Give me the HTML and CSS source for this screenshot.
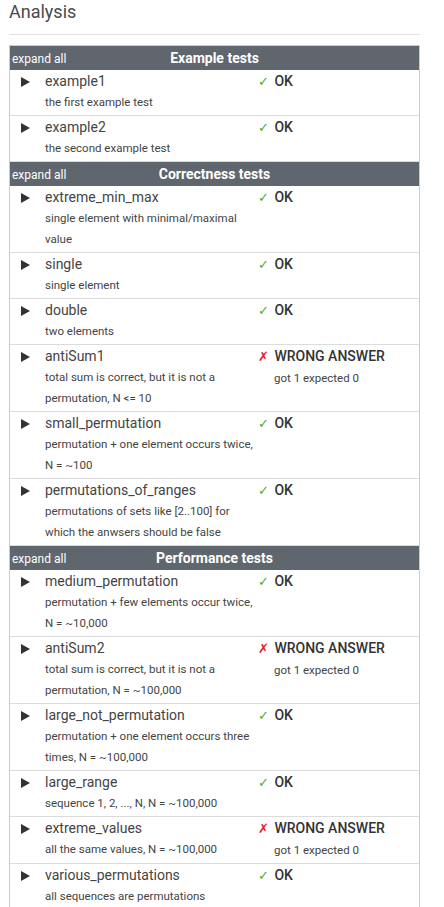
FILE: index.html
```html
<!DOCTYPE html>
<html>
<head>
<meta charset="utf-8">
<link rel="stylesheet" href="styles.css">
</head>
<body>
<div class="page">
  <h2 class="title">Analysis</h2>
  <hr class="rule">
  <div class="tests">
    <div class="group-head"><span class="expand">expand all</span><span class="group-title">Example tests</span><span></span></div>

    <div class="test">
      <div class="arrow"><svg width="9" height="10" viewBox="0 0 9 10"><polygon points="0,0 9,5 0,10" fill="#333"/></svg></div>
      <div class="info"><div class="name">example1</div><div class="desc">the first example test</div></div>
      <div class="result"><div class="status"><span class="mark ok">✓</span> OK</div></div>
    </div>
    <div class="test">
      <div class="arrow"><svg width="9" height="10" viewBox="0 0 9 10"><polygon points="0,0 9,5 0,10" fill="#333"/></svg></div>
      <div class="info"><div class="name">example2</div><div class="desc">the second example test</div></div>
      <div class="result"><div class="status"><span class="mark ok">✓</span> OK</div></div>
    </div>

    <div class="group-head"><span class="expand">expand all</span><span class="group-title">Correctness tests</span><span></span></div>

    <div class="test">
      <div class="arrow"><svg width="9" height="10" viewBox="0 0 9 10"><polygon points="0,0 9,5 0,10" fill="#333"/></svg></div>
      <div class="info"><div class="name">extreme_min_max</div><div class="desc">single element with minimal/maximal value</div></div>
      <div class="result"><div class="status"><span class="mark ok">✓</span> OK</div></div>
    </div>
    <div class="test">
      <div class="arrow"><svg width="9" height="10" viewBox="0 0 9 10"><polygon points="0,0 9,5 0,10" fill="#333"/></svg></div>
      <div class="info"><div class="name">single</div><div class="desc">single element</div></div>
      <div class="result"><div class="status"><span class="mark ok">✓</span> OK</div></div>
    </div>
    <div class="test">
      <div class="arrow"><svg width="9" height="10" viewBox="0 0 9 10"><polygon points="0,0 9,5 0,10" fill="#333"/></svg></div>
      <div class="info"><div class="name">double</div><div class="desc">two elements</div></div>
      <div class="result"><div class="status"><span class="mark ok">✓</span> OK</div></div>
    </div>
    <div class="test">
      <div class="arrow"><svg width="9" height="10" viewBox="0 0 9 10"><polygon points="0,0 9,5 0,10" fill="#333"/></svg></div>
      <div class="info"><div class="name">antiSum1</div><div class="desc">total sum is correct, but it is not a permutation, N &lt;= 10</div></div>
      <div class="result"><div class="status"><span class="mark bad">✗</span> WRONG ANSWER</div><div class="detail">got 1 expected 0</div></div>
    </div>
    <div class="test">
      <div class="arrow"><svg width="9" height="10" viewBox="0 0 9 10"><polygon points="0,0 9,5 0,10" fill="#333"/></svg></div>
      <div class="info"><div class="name">small_permutation</div><div class="desc">permutation + one element occurs twice, N = ~100</div></div>
      <div class="result"><div class="status"><span class="mark ok">✓</span> OK</div></div>
    </div>
    <div class="test">
      <div class="arrow"><svg width="9" height="10" viewBox="0 0 9 10"><polygon points="0,0 9,5 0,10" fill="#333"/></svg></div>
      <div class="info"><div class="name">permutations_of_ranges</div><div class="desc">permutations of sets like [2..100] for which the anwsers should be false</div></div>
      <div class="result"><div class="status"><span class="mark ok">✓</span> OK</div></div>
    </div>

    <div class="group-head"><span class="expand">expand all</span><span class="group-title">Performance tests</span><span></span></div>

    <div class="test">
      <div class="arrow"><svg width="9" height="10" viewBox="0 0 9 10"><polygon points="0,0 9,5 0,10" fill="#333"/></svg></div>
      <div class="info"><div class="name">medium_permutation</div><div class="desc">permutation + few elements occur twice, N = ~10,000</div></div>
      <div class="result"><div class="status"><span class="mark ok">✓</span> OK</div></div>
    </div>
    <div class="test">
      <div class="arrow"><svg width="9" height="10" viewBox="0 0 9 10"><polygon points="0,0 9,5 0,10" fill="#333"/></svg></div>
      <div class="info"><div class="name">antiSum2</div><div class="desc">total sum is correct, but it is not a permutation, N = ~100,000</div></div>
      <div class="result"><div class="status"><span class="mark bad">✗</span> WRONG ANSWER</div><div class="detail">got 1 expected 0</div></div>
    </div>
    <div class="test">
      <div class="arrow"><svg width="9" height="10" viewBox="0 0 9 10"><polygon points="0,0 9,5 0,10" fill="#333"/></svg></div>
      <div class="info"><div class="name">large_not_permutation</div><div class="desc">permutation + one element occurs three times, N = ~100,000</div></div>
      <div class="result"><div class="status"><span class="mark ok">✓</span> OK</div></div>
    </div>
    <div class="test">
      <div class="arrow"><svg width="9" height="10" viewBox="0 0 9 10"><polygon points="0,0 9,5 0,10" fill="#333"/></svg></div>
      <div class="info"><div class="name">large_range</div><div class="desc">sequence 1, 2, ..., N, N = ~100,000</div></div>
      <div class="result"><div class="status"><span class="mark ok">✓</span> OK</div></div>
    </div>
    <div class="test">
      <div class="arrow"><svg width="9" height="10" viewBox="0 0 9 10"><polygon points="0,0 9,5 0,10" fill="#333"/></svg></div>
      <div class="info"><div class="name">extreme_values</div><div class="desc">all the same values, N = ~100,000</div></div>
      <div class="result"><div class="status"><span class="mark bad">✗</span> WRONG ANSWER</div><div class="detail">got 1 expected 0</div></div>
    </div>
    <div class="test">
      <div class="arrow"><svg width="9" height="10" viewBox="0 0 9 10"><polygon points="0,0 9,5 0,10" fill="#333"/></svg></div>
      <div class="info"><div class="name">various_permutations</div><div class="desc">all sequences are permutations</div></div>
      <div class="result"><div class="status"><span class="mark ok">✓</span> OK</div></div>
    </div>
  </div>
</div>
</body>
</html>
```
FILE: styles.css
```css
html, body {
  margin: 0;
  padding: 0;
  background: #fff;
}
body {
  font-family: Roboto, "Liberation Sans", sans-serif;
  color: #444;
}
.page {
  width: 411px;
  padding-left: 9px;
}
.title {
  margin: 0;
  font-size: 18px;
  line-height: 24px;
  font-weight: 400;
  color: #4a4a4a;
}
.rule {
  margin: 10px 0;
  height: 0;
  border: 0;
  border-top: 1px solid #e2e2e2;
}
.tests {
  border: 1px solid #ccc;
}
.group-head {
  display: grid;
  grid-template-columns: 1fr auto 1fr;
  align-items: baseline;
  height: 24px;
  line-height: 24px;
  background: #5f666d;
  color: #fff;
}
.expand {
  font-size: 12px;
  padding-left: 2px;
}
.group-title {
  font-size: 14px;
  font-weight: 700;
}
.test {
  display: flex;
  padding-bottom: 2px;
  border-bottom: 1px solid #dcdcdc;
}
.arrow {
  width: 35px;
  box-sizing: border-box;
  padding-left: 11px;
  height: 22px;
  display: flex;
  align-items: center;
  flex: none;
}
.arrow svg {
  display: block;
  margin-top: 1px;
}
.info {
  width: 213px;
  box-sizing: border-box;
  padding-right: 3px;
  flex: none;
}
.name {
  font-size: 14px;
  line-height: 22px;
  color: #444;
}
.desc {
  font-size: 11.5px;
  line-height: 21px;
  color: #444;
}
.result {
  flex: 1;
}
.status {
  font-size: 14px;
  line-height: 22px;
  font-weight: 500;
  color: #333;
}
.mark {
  font-family: "DejaVu Sans", sans-serif;
  font-size: 13px;
  font-weight: 400;
  margin-right: 2px;
}
.mark.ok {
  color: #3cb034;
}
.mark.bad {
  color: #d9262b;
}
.detail {
  font-size: 11.5px;
  line-height: 21px;
  padding-left: 16px;
  color: #444;
}
```
